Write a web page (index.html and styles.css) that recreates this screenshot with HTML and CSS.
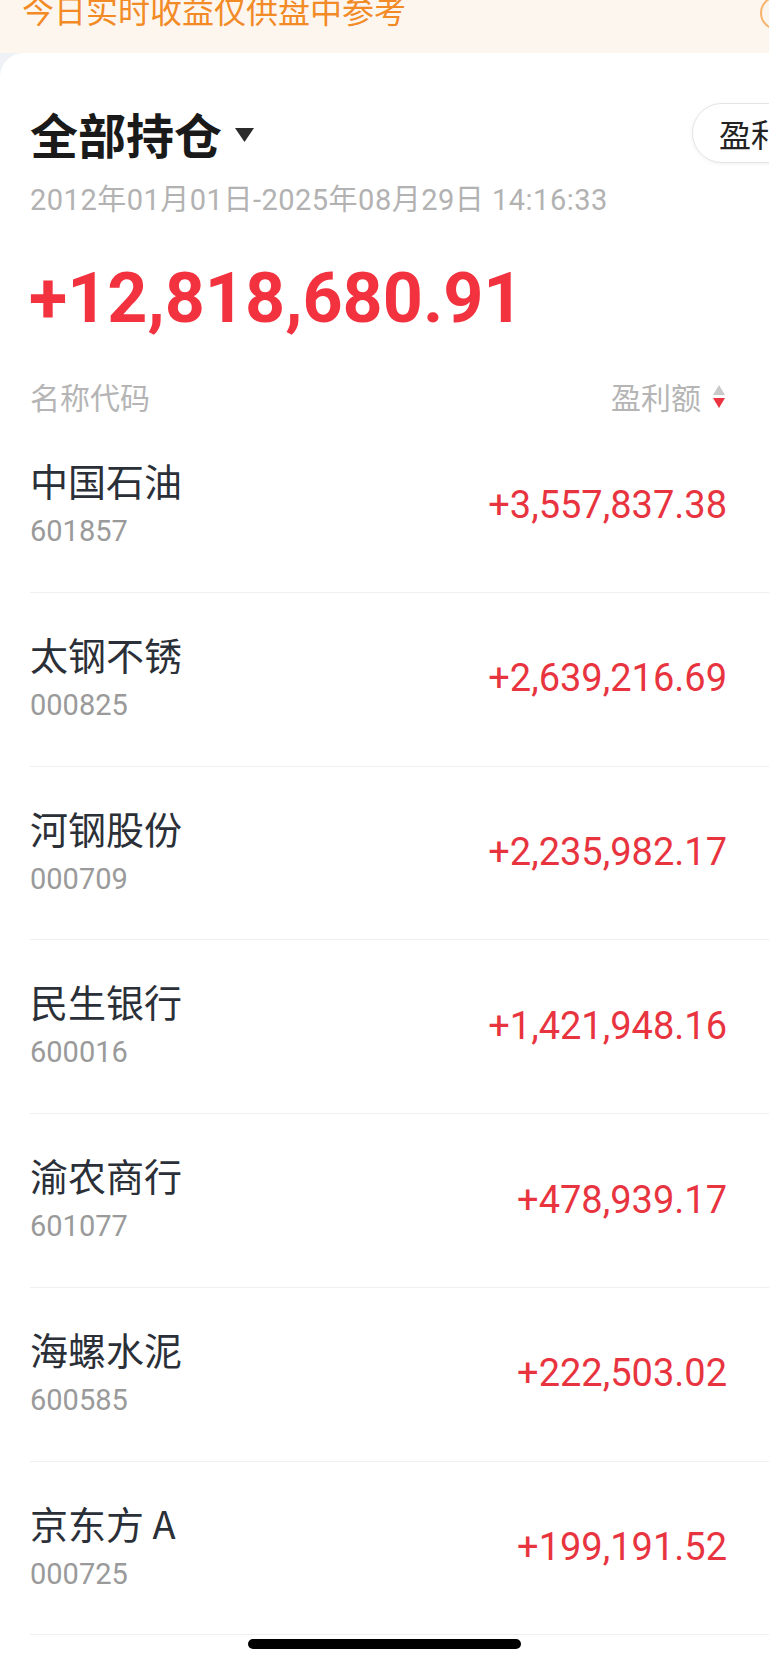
FILE: index.html
```html
<!DOCTYPE html>
<html lang="zh-CN">

<head>
    <meta charset="UTF-8">
    <meta name="viewport" content="width=device-width, initial-scale=1.0">
    <title>全部持仓</title>
    <link rel="stylesheet" href="styles.css">
</head>

<body>
    <div class="notice">
        <p class="notice-text">今日实时收益仅供盘中参考</p>
        <span class="notice-close"></span>
    </div>

    <div class="card">
        <div class="title-row">
            <h1 class="title">全部持仓</h1>
            <svg class="caret" viewBox="0 0 19 14"><path d="M0 0H19L9.5 14Z" fill="#2b2b2b"/></svg>
            <button class="sort-btn">盈利额</button>
        </div>
        <div class="period">2012年01月01日-2025年08月29日 14:16:33</div>
        <div class="total">+12,818,680.91</div>

        <div class="list">
            <div class="list-head">
                <span>名称代码</span>
                <span class="sort">盈利额
                    <svg viewBox="0 0 12 23">
                        <path d="M6 0L12 10H0Z" fill="#c9c9c9"/>
                        <path d="M0 13H12L6 23Z" fill="#ec3340"/>
                    </svg>
                </span>
            </div>

            <div class="row">
                <div><div class="name">中国石油</div><div class="code">601857</div></div>
                <div class="amount">+3,557,837.38</div>
            </div>
            <div class="row">
                <div><div class="name">太钢不锈</div><div class="code">000825</div></div>
                <div class="amount">+2,639,216.69</div>
            </div>
            <div class="row">
                <div><div class="name">河钢股份</div><div class="code">000709</div></div>
                <div class="amount">+2,235,982.17</div>
            </div>
            <div class="row">
                <div><div class="name">民生银行</div><div class="code">600016</div></div>
                <div class="amount">+1,421,948.16</div>
            </div>
            <div class="row">
                <div><div class="name">渝农商行</div><div class="code">601077</div></div>
                <div class="amount">+478,939.17</div>
            </div>
            <div class="row">
                <div><div class="name">海螺水泥</div><div class="code">600585</div></div>
                <div class="amount">+222,503.02</div>
            </div>
            <div class="row">
                <div><div class="name">京东方 A</div><div class="code">000725</div></div>
                <div class="amount">+199,191.52</div>
            </div>
        </div>
    </div>

    <div class="home-bar"></div>
</body>
</html>
```

FILE: styles.css
```css
body {
    margin: 0;
    background-color: #eef2f6;
    font-family: Roboto, "Noto Sans CJK SC", sans-serif;
}

.notice {
    position: relative;
    height: 53px;
    padding: 0 22px;
    box-sizing: border-box;
    overflow: hidden;
    background-color: #fdf6ef;
}

.notice-text {
    margin: -11px 0 0;
    font: 32px/40px "Noto Sans CJK SC", sans-serif;
    color: #f28a26;
}

.notice-close {
    position: absolute;
    left: 760px;
    top: -4px;
    width: 30px;
    height: 30px;
    border: 2px solid #f7b46e;
    border-radius: 50%;
}

.card {
    min-height: 1612px;
    padding: 50px 0 0 30px;
    box-sizing: border-box;
    overflow: hidden;
    background-color: #fff;
    border-radius: 24px 0 0 0;
}

.title-row {
    display: flex;
    align-items: center;
    height: 60px;
}

.title {
    margin: 0;
    font: 700 48px/60px "Noto Sans CJK SC", sans-serif;
    color: #1a1a1a;
}

.caret {
    width: 19px;
    height: 14px;
    margin: 4px 0 0 13px;
}

.sort-btn {
    flex-shrink: 0;
    width: 120px;
    height: 60px;
    margin: 0 -43px 0 auto;
    padding: 0 0 0 26px;
    border: 1.5px solid #e4e4e4;
    border-radius: 30px;
    background-color: #fff;
    box-shadow: 0 1px 4px rgba(0, 0, 0, 0.06);
    text-align: left;
    white-space: nowrap;
    font: 32px/1 "Noto Sans CJK SC", sans-serif;
    color: #222;
}

.period {
    margin-top: 17px;
    font-size: 29px;
    line-height: 40px;
    letter-spacing: 0.5px;
    color: #b2b2b2;
}

.total {
    margin: 33px 0 0 -1px;
    font-size: 70px;
    font-weight: 700;
    line-height: 90px;
    color: #f2333f;
}

.list-head {
    display: flex;
    justify-content: space-between;
    align-items: center;
    padding: 32px 44px 2px 0;
    font: 30px/42px "Noto Sans CJK SC", sans-serif;
    color: #b5b5b5;
}

.sort {
    display: flex;
    align-items: center;
}

.sort svg {
    width: 12px;
    height: 23px;
    margin-left: 12px;
}

.row {
    display: flex;
    justify-content: space-between;
    align-items: center;
    padding: 34px 42px 35.75px 0;
    border-bottom: 1px solid #efefef;
}

.name {
    font: 38px/53px "Noto Sans CJK SC", sans-serif;
    color: #2b3038;
}

.code {
    font-size: 29px;
    line-height: 50px;
    color: #9a9a9a;
}

.amount {
    font-size: 38px;
    line-height: 50px;
    color: #e8343f;
}

.home-bar {
    position: fixed;
    left: 248px;
    bottom: 16px;
    width: 273px;
    height: 10px;
    border-radius: 5px;
    background-color: #000;
}
```
